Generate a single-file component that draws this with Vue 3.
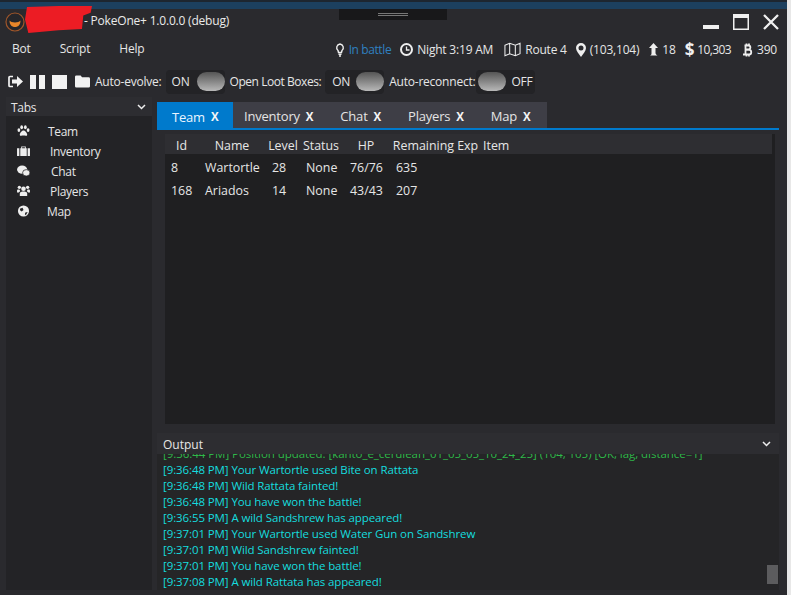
<script setup>
const menus = ['Bot', 'Script', 'Help']
const sideItems = [
  { name: 'Team', icon: 'paw', cls: 'i0' },
  { name: 'Inventory', icon: 'case', cls: 'i1' },
  { name: 'Chat', icon: 'chat', cls: 'i2' },
  { name: 'Players', icon: 'users', cls: 'i3' },
  { name: 'Map', icon: 'globe', cls: 'i4' }
]
const tabs = ['Team', 'Inventory', 'Chat', 'Players', 'Map']
const columns = ['Id', 'Name', 'Level', 'Status', 'HP', 'Remaining Exp', 'Item']
const rows = [
  ['8', 'Wartortle', '28', 'None', '76/76', '635', ''],
  ['168', 'Ariados', '14', 'None', '43/43', '207', '']
]
const logs = [
  '[9:36:48 PM] Your Wartortle used Bite on Rattata',
  '[9:36:48 PM] Wild Rattata fainted!',
  '[9:36:48 PM] You have won the battle!',
  '[9:36:55 PM] A wild Sandshrew has appeared!',
  '[9:37:01 PM] Your Wartortle used Water Gun on Sandshrew',
  '[9:37:01 PM] Wild Sandshrew fainted!',
  '[9:37:01 PM] You have won the battle!',
  '[9:37:08 PM] A wild Rattata has appeared!'
]
</script>

<template>
  <div class="page">
    <div class="topstrip"></div>
    <div class="window">
      <div class="grip"><span></span></div>
      <div class="redact"></div>

      <header class="titlebar">
        <svg class="logo" width="20" height="20" viewBox="0 0 20 20">
          <circle cx="10" cy="10" r="9" fill="#26262a" stroke="#a0562a" stroke-width="1.2" />
          <path d="M4.5 8.5 C6 11 14 11 15.500 8.500 C15.500 13 13 15 10 15 C7 15 4.500 13 4.500 8.500Z" fill="#e8862a" />
        </svg>
        <span class="title">- PokeOne+ 1.0.0.0 (debug)</span>
        <div class="winbtns">
          <svg width="16" height="16" viewBox="0 0 16 16"><rect x="0" y="11" width="16" height="4" fill="#f0f0f0" /></svg>
          <svg width="16" height="16" viewBox="0 0 16 16"><path d="M.75 .75H15.250V15.250H.75Z" fill="none" stroke="#f0f0f0" stroke-width="1.500" /><rect x="1" y="1" width="14" height="3" fill="#f0f0f0" /></svg>
          <svg width="16" height="16" viewBox="0 0 16 16"><path d="M1 1L15 15M15 1L1 15" stroke="#f0f0f0" stroke-width="2.300" /></svg>
        </div>
      </header>

      <div class="menurow">
        <nav class="menu"><span v-for="m in menus" :key="m">{{ m }}</span></nav>
        <div class="status">
          <span class="st st-bulb">
            <svg width="10" height="14" viewBox="0 0 10 14"><path d="M5 1A3.700 3.700 0 0 0 3 7.500L3.500 9.500H6.500L7 7.500A3.700 3.700 0 0 0 5 1Z" fill="none" stroke="#eee" stroke-width="1.400" /><path d="M3.500 11.200H6.500M4 13H6" stroke="#eee" stroke-width="1.400" /></svg>
            <em>In battle</em>
          </span>
          <span class="st st-night">
            <svg width="13" height="13" viewBox="0 0 13 13"><circle cx="6.500" cy="6.500" r="5.500" fill="none" stroke="#eee" stroke-width="2" /><path d="M6.500 3.500V7H9.500" fill="none" stroke="#eee" stroke-width="1.300" /></svg>
            Night 3:19 AM
          </span>
          <span class="st st-route">
            <svg width="17" height="15" viewBox="0 0 18 15"><path d="M1 3L6 1L12 3L17 1V12L12 14L6 12L1 14ZM6 1V12M12 3V14" fill="none" stroke="#eee" stroke-width="1.100" /></svg>
            Route 4
          </span>
          <span class="st st-pos">
            <svg width="10" height="14" viewBox="0 0 10 14"><path fill-rule="evenodd" d="M5 0A5 5 0 0 0 0 5C0 8 3 11 5 14C7 11 10 8 10 5A5 5 0 0 0 5 0ZM5 2.500A2.500 2.500 0 1 1 5 7.500A2.500 2.500 0 1 1 5 2.500Z" fill="#eee" /></svg>
            (103,104)
          </span>
          <span class="st st-lvl">
            <svg width="9" height="13" viewBox="0 0 9 13"><path d="M4.500 0L9 5H6.500V10C6.500 11 7.500 12 8.500 12.500H1C2.500 12 2.500 11 2.500 10V5H0Z" fill="#eee" /></svg>
            18
          </span>
          <span class="st st-money"><b class="dollar">$</b><span class="money">10,303</span></span>
          <span class="st st-coin">
            <svg width="11" height="14" viewBox="0 0 11 14"><path d="M2.500 2.500H6.500C9 2.500 9 6.500 6.500 6.500H3.500M3.500 6.800H7C10 6.800 10 11.500 7 11.500H1M3.500 2.500V11.500M4.500 0.500V2.500M7 0.500V2.500M4.500 11.500V13.500M7 11.500V13.500" fill="none" stroke="#eee" stroke-width="1.800" /></svg>
            390
          </span>
        </div>
      </div>

      <div class="toolbar">
        <span class="tool">
          <svg width="15" height="13" viewBox="0 0 15 13"><path d="M5 1.500H2A1 1 0 0 0 1 2.500V10.500A1 1 0 0 0 2 11.500H5" fill="none" stroke="#f2f2f2" stroke-width="1.700" /><path d="M4 4.500H9V1L15 6.500L9 12V8.500H4Z" fill="#f2f2f2" /></svg>
        </span>
        <span class="tool">
          <svg width="15" height="14" viewBox="0 0 15 14"><rect width="6" height="14" fill="#f2f2f2" /><rect x="9" width="6" height="14" fill="#f2f2f2" /></svg>
        </span>
        <span class="tool">
          <svg width="15" height="14" viewBox="0 0 15 14"><rect width="15" height="14" fill="#f2f2f2" /></svg>
        </span>
        <span class="tool tool-folder">
          <svg width="16" height="13" viewBox="0 0 16 13"><path d="M1.500 0H6L7.500 2H14.500A1.500 1.500 0 0 1 16 3.500V11.500A1.500 1.500 0 0 1 14.500 13H1.500A1.500 1.500 0 0 1 0 11.500V1.500A1.500 1.500 0 0 1 1.500 0Z" fill="#f2f2f2" /></svg>
        </span>
        <span class="opt opt-evolve">Auto-evolve:</span>
        <span class="switch"><span>ON</span><i></i></span>
        <span class="opt opt-loot">Open Loot Boxes:</span>
        <span class="switch sw2"><span>ON</span><i></i></span>
        <span class="opt opt-rec">Auto-reconnect:</span>
        <span class="switch off"><i></i><span>OFF</span></span>
      </div>

      <div class="body">
        <aside class="sidebar">
          <div class="sidehead">
            <span>Tabs</span>
            <svg width="9" height="6" viewBox="0 0 9 6"><path d="M1 1L4.500 4.500L8 1" fill="none" stroke="#eee" stroke-width="1.500" /></svg>
          </div>
          <ul class="sidelist">
            <li v-for="s in sideItems" :key="s.name" :class="s.cls">
              <svg class="sideicon" width="13" height="12" viewBox="0 0 14 13">
                <g v-if="s.icon === 'paw'" fill="#eee">
                  <ellipse cx="2" cy="5.500" rx="1.500" ry="2" />
                  <ellipse cx="5" cy="2.500" rx="1.500" ry="2.200" />
                  <ellipse cx="9" cy="2.500" rx="1.500" ry="2.200" />
                  <ellipse cx="12" cy="5.500" rx="1.500" ry="2" />
                  <path d="M7 6C9 6 11 9 11 10.500C11 12.500 8.500 11.500 7 11.500C5.500 11.500 3 12.500 3 10.500C3 9 5 6 7 6Z" />
                </g>
                <g v-else-if="s.icon === 'case'" fill="#eee">
                  <path d="M0 3.500H2.500V12H0ZM11.500 3.500H14V12H11.500ZM3.500 3.500H4.500V1.500H9.500V3.500H10.500V12H3.500ZM5.500 2.500V3.500H8.500V2.500Z" fill-rule="evenodd" />
                </g>
                <g v-else-if="s.icon === 'chat'" fill="#eee">
                  <ellipse cx="5.500" cy="5" rx="5.500" ry="4.500" />
                  <ellipse cx="10" cy="8.500" rx="4" ry="3.500" stroke="#232326" stroke-width="0.800" />
                </g>
                <g v-else-if="s.icon === 'users'" fill="#eee">
                  <circle cx="7" cy="4" r="2.500" />
                  <circle cx="2.500" cy="2.500" r="1.800" />
                  <circle cx="11.500" cy="2.500" r="1.800" />
                  <path d="M3 12V9C3 7.500 5 7 7 7C9 7 11 7.500 11 9V12ZM0 8V6C0 5 1 5 2.500 5L3.500 6.500L2 8ZM14 8V6C14 5 13 5 11.500 5L10.500 6.500L12 8Z" />
                </g>
                <g v-else>
                  <circle cx="7" cy="6.500" r="6" fill="#eee" />
                  <path d="M3 4L6 3L7 5.500L5 7L3.500 6ZM9 8L11.500 7.500L9.500 11L8.500 10Z" fill="#232326" />
                </g>
              </svg>
              <span>{{ s.name }}</span>
            </li>
          </ul>
        </aside>

        <main class="content">
          <div class="tabstrip">
            <div v-for="(t, i) in tabs" :key="t" class="tab" :class="{ active: i === 0 }">
              <span>{{ t }}</span><b>X</b>
            </div>
          </div>
          <div class="tabline"></div>
          <section class="tablepanel">
            <div class="trow thead">
              <span v-for="c in columns" :key="c">{{ c }}</span>
            </div>
            <div v-for="r in rows" :key="r[0]" class="trow tdata">
              <span v-for="(v, i) in r" :key="i">{{ v }}</span>
            </div>
          </section>
          <section class="output">
            <div class="outhead">
              <span>Output</span>
              <svg width="9" height="6" viewBox="0 0 9 6"><path d="M1 1L4.500 4.500L8 1" fill="none" stroke="#eee" stroke-width="1.500" /></svg>
            </div>
            <div class="outbody">
              <div class="logs">
                <div class="cut">[9:36:44 PM] Position updated: [kanto_e_cerulean_01_05_05_10_24_25] (104, 105) [OK, lag, distance=1]</div>
                <div v-for="(l, i) in logs" :key="i" class="log">{{ l }}</div>
              </div>
              <div class="thumb"></div>
            </div>
          </section>
        </main>
      </div>
    </div>
  </div>
</template>

<style scoped>
.page {
  width: 791px;
  height: 595px;
  overflow: hidden;
  background: #e8e8e8;
  font-family: "Open Sans", "Noto Sans", sans-serif;
  font-size: 12px;
  color: #e6e6e6;
}
.topstrip {
  height: 9px;
  width: 787px;
  background: #1c405f;
  border-top: 2px solid #1d2630;
  box-sizing: border-box;
}
.window {
  position: relative;
  width: 787px;
  height: 586px;
  background: #2a2a2e;
  display: flex;
  flex-direction: column;
}
.grip {
  position: absolute;
  left: 339px;
  top: 0;
  width: 108px;
  height: 11px;
  background: #18181a;
  display: flex;
  justify-content: center;
  padding-top: 4px;
  box-sizing: border-box;
}
.grip span {
  width: 30px;
  height: 3px;
  border-top: 1px solid #777;
  border-bottom: 1px solid #777;
  box-sizing: border-box;
}
.redact {
  position: absolute;
  left: 25px;
  top: -3px;
  width: 67px;
  height: 27px;
  background: #ec1c24;
  clip-path: polygon(3% 4%, 50% 0, 100% 0, 98% 25%, 87% 35%, 85% 85%, 50% 90%, 5% 100%, 0 50%);
}
.titlebar {
  height: 24px;
  margin-top: 1px;
  display: flex;
  align-items: center;
  padding-left: 5px;
}
.logo {
  flex: none;
}
.title {
  margin-left: 59px;
  padding-bottom: 3px;
  font-size: 12px;
  letter-spacing: -0.2px;
  color: #eaeaea;
}
.winbtns {
  margin-left: auto;
  margin-right: 8px;
  display: flex;
  gap: 14px;
  align-items: center;
}
.menurow {
  height: 29px;
  display: flex;
  align-items: center;
  letter-spacing: -0.2px;
}
.menu {
  display: flex;
  gap: 29px;
  padding-left: 12px;
}
.status {
  margin-left: auto;
  margin-right: 10px;
  display: flex;
  align-items: center;
  padding-top: 2px;
}
.st {
  display: inline-flex;
  align-items: center;
  gap: 4px;
  white-space: nowrap;
}
.st em {
  font-style: normal;
  letter-spacing: -0.4px;
  color: #2f80c0;
}
.st-night { margin-left: 9px; }
.st-route { margin-left: 11px; }
.st-pos { margin-left: 9px; }
.st-lvl { margin-left: 10px; }
.st-money { margin-left: 9px; gap: 3px; }
.st-coin { margin-left: 11px; }
.money {
  letter-spacing: -0.6px;
}
.dollar {
  font-size: 17px;
  line-height: 14px;
  font-weight: 700;
  color: #f0f0f0;
}
.toolbar {
  height: 33px;
  display: flex;
  align-items: center;
  padding: 4px 0 0 8px;
  box-sizing: border-box;
  letter-spacing: -0.22px;
}
.tool {
  width: 15px;
  margin-right: 7px;
  display: inline-flex;
  justify-content: center;
}
.tool-folder {
  margin-left: 1px;
  margin-right: 5px;
}
.opt {
  white-space: nowrap;
}
.opt-loot {
  margin-left: 5px;
  letter-spacing: -0.45px;
}
.opt-rec { margin-left: 5px; }
.switch {
  display: inline-flex;
  align-items: center;
  justify-content: space-between;
  width: 59px;
  height: 24px;
  margin-left: 4px;
  padding-left: 6px;
  background: #232326;
  border-radius: 4px;
  box-sizing: border-box;
}
.switch i {
  display: block;
  width: 28px;
  height: 19px;
  border-radius: 10px;
  background: linear-gradient(#555, #b8b8b8);
}
.switch.sw2 {
  padding-left: 7px;
}
.switch.off {
  margin-left: 1px;
  padding: 0 3px 0 2px;
}
.body {
  flex: 1;
  display: flex;
  min-height: 0;
  padding: 1px 8px 5px 6px;
  gap: 5px;
}
.sidebar {
  width: 146px;
  background: #232326;
  flex: none;
  letter-spacing: -0.3px;
}
.sidehead {
  height: 19px;
  background: #2d2d31;
  display: flex;
  align-items: center;
  justify-content: space-between;
  padding: 1px 6px 0 5px;
  box-sizing: border-box;
}
.sidelist {
  list-style: none;
  margin: 0;
  padding: 5px 0 0;
}
.sidelist li {
  height: 20px;
  display: flex;
  align-items: center;
  padding-left: 11px;
}
.sideicon { flex: none; }
.i0 span { margin-left: 18px; }
.i1 span { margin-left: 20px; }
.i2 span { margin-left: 21px; }
.i3 span { margin-left: 20px; }
.i4 span { margin-left: 17px; }
.content {
  flex: 1;
  min-width: 0;
  display: flex;
  flex-direction: column;
  margin-top: 5px;
}
.tabstrip {
  display: flex;
  width: 390px;
  height: 26px;
  background: #3e3e46;
  flex: none;
}
.tab {
  display: flex;
  align-items: center;
  gap: 6px;
  padding: 2px 13.500px 0;
  font-size: 13px;
  letter-spacing: -0.2px;
  color: #e4e4e4;
}
.tab:nth-child(2) {
  padding-left: 11px;
}
.tab b {
  font-size: 11.500px;
  color: #f5f5f5;
}
.tab.active {
  background: #007acc;
  width: 76px;
  padding: 3px 0 0 15px;
  box-sizing: border-box;
  color: #eaf5ff;
}
.tabline {
  height: 2px;
  background: #007acc;
  flex: none;
}
.tablepanel {
  height: 290px;
  margin: 4px 4px 0 8px;
  background: #1f1f21;
  flex: none;
  font-size: 12.400px;
}
.trow {
  display: grid;
  grid-template-columns: 33px 68px 34px 42px 48px 91px 1fr;
  width: 607px;
}
.thead {
  height: 20px;
  padding-top: 2px;
  box-sizing: border-box;
  align-items: center;
  background: #2e2e32;
}
.thead span {
  text-align: center;
  white-space: nowrap;
}
.thead span:last-child {
  text-align: left;
  padding-left: 2px;
}
.tdata {
  height: 23px;
  align-items: center;
}
.tdata span {
  padding-left: 6px;
}
.tdata span:nth-child(2) {
  padding-left: 7px;
}
.tdata span:nth-child(5) {
  padding-left: 8px;
}
.thead + .tdata {
  margin-top: 2px;
}
.output {
  margin-top: 9px;
  flex: 1;
  min-height: 0;
  display: flex;
  flex-direction: column;
  background: #252527;
}
.outhead {
  height: 21px;
  flex: none;
  background: #2d2d31;
  display: flex;
  align-items: center;
  justify-content: space-between;
  padding: 1px 8px 0 6px;
  box-sizing: border-box;
}
.outbody {
  position: relative;
  flex: 1;
  overflow: hidden;
}
.logs {
  padding-left: 6px;
  margin-top: -8px;
  font-size: 11.500px;
  line-height: 16px;
  letter-spacing: -0.1px;
}
.cut {
  color: #2fb84a;
  white-space: nowrap;
  letter-spacing: -0.05px;
}
.log {
  color: #15dcdf;
  white-space: nowrap;
}
.thumb {
  position: absolute;
  right: 1px;
  bottom: 6px;
  width: 11px;
  height: 19px;
  background: #5c5c5e;
}
</style>
